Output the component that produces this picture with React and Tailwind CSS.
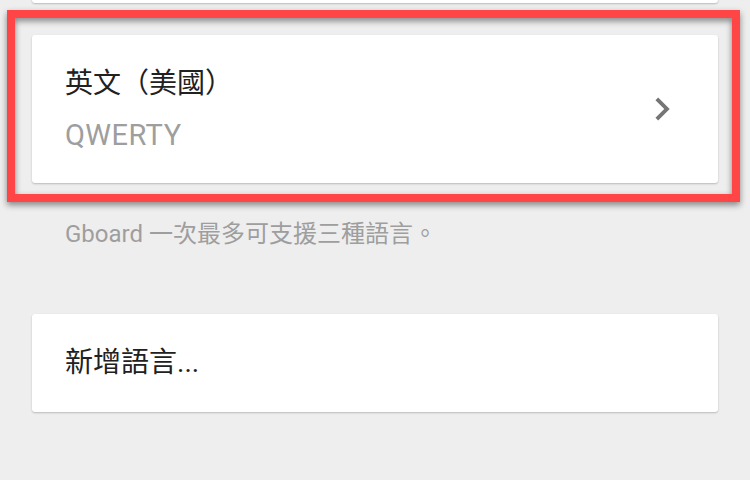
export default function App() {
  const font = { fontFamily: "Roboto, 'Noto Sans CJK TC', 'Noto Sans', sans-serif" };
  return (
    <div className="relative w-[750px] h-[480px] overflow-hidden bg-[#eeeeee]" style={font}>
      <div className="flex flex-col px-[32px]">
        <div className="-mt-[97px] h-[100px] rounded-[3px] bg-white shadow-[0_1px_2px_rgba(0,0,0,0.22)]" />
        <div className="mt-[32px] h-[148px] rounded-[3px] bg-white shadow-[0_1px_2px_rgba(0,0,0,0.22)] flex items-center justify-between pl-[33px] pr-[33px]">
          <div className="flex flex-col gap-[15px]">
            <div className="text-[28px] leading-[36px] text-[#212121]">英文（美國）</div>
            <div className="text-[29px] leading-[36px] text-[#9e9e9e] tracking-[0.5px]">QWERTY</div>
          </div>
          <svg width="46" height="46" viewBox="0 0 24 24" className="shrink-0">
            <path d="M10 6L8.59 7.41 13.17 12l-4.58 4.59L10 18l6-6z" fill="#757575" />
          </svg>
        </div>
        <div className="mt-[36px] pl-[33px] text-[24px] leading-[30px] text-[#9e9e9e]">
          Gboard 一次最多可支援三種語言。
        </div>
        <div className="mt-[65px] h-[98px] rounded-[3px] bg-white shadow-[0_1px_2px_rgba(0,0,0,0.22)] flex items-center pl-[33px]">
          <div className="text-[28px] leading-[36px] text-[#212121]">新增語言...</div>
        </div>
      </div>
      <div className="absolute left-[7px] top-[10px] w-[733px] h-[192px] border-[8px] border-[#ff4545] drop-shadow-[0_3px_3px_rgba(0,0,0,0.45)] pointer-events-none" />
    </div>
  );
}
